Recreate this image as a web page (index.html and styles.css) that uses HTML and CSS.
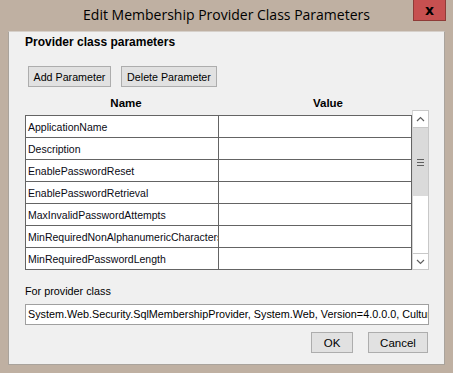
FILE: index.html
```html
<!DOCTYPE html>
<html lang="en">
<head>
    <meta charset="UTF-8">
    <title>Edit Membership Provider Class Parameters</title>
    <link rel="stylesheet" href="styles.css">
</head>
<body>
    <div class="window">
        <div class="titlebar">
            <span class="title">Edit Membership Provider Class Parameters</span>
            <button class="close">x</button>
        </div>
        <div class="client">
            <div class="heading">Provider class parameters</div>
            <div class="toolbar">
                <button class="btn add">Add Parameter</button>
                <button class="btn delete">Delete Parameter</button>
            </div>
            <div class="grid-head">
                <span>Name</span>
                <span>Value</span>
            </div>
            <div class="grid-wrap">
                <table class="grid">
                    <tr><td class="name">ApplicationName</td><td></td></tr>
                    <tr><td class="name">Description</td><td></td></tr>
                    <tr><td class="name">EnablePasswordReset</td><td></td></tr>
                    <tr><td class="name">EnablePasswordRetrieval</td><td></td></tr>
                    <tr><td class="name">MaxInvalidPasswordAttempts</td><td></td></tr>
                    <tr><td class="name">MinRequiredNonAlphanumericCharacters</td><td></td></tr>
                    <tr><td class="name">MinRequiredPasswordLength</td><td></td></tr>
                </table>
                <div class="scrollbar">
                    <div class="arrow up">
                        <svg width="9" height="6" viewBox="0 0 9 6"><path d="M1 5 L4.5 1.5 L8 5" fill="none" stroke="#606060" stroke-width="1.2"/></svg>
                    </div>
                    <div class="thumb">
                        <svg width="7" height="7" viewBox="0 0 7 7"><rect x="0" y="0" width="7" height="1" fill="#606060"/><rect x="0" y="3" width="7" height="1" fill="#606060"/><rect x="0" y="6" width="7" height="1" fill="#606060"/></svg>
                    </div>
                    <div class="track"></div>
                    <div class="arrow down">
                        <svg width="9" height="6" viewBox="0 0 9 6"><path d="M1 1 L4.5 4.5 L8 1" fill="none" stroke="#606060" stroke-width="1.2"/></svg>
                    </div>
                </div>
            </div>
            <div class="label">For provider class</div>
            <div class="textbox">System.Web.Security.SqlMembershipProvider, System.Web, Version=4.0.0.0, Culture=neutral, PublicKeyToken=b03f5f7f11d50a3a</div>
            <div class="actions">
                <button class="btn ok">OK</button>
                <button class="btn cancel">Cancel</button>
            </div>
        </div>
    </div>
</body>
</html>
```

FILE: styles.css
```css
* {
    box-sizing: border-box;
    margin: 0;
    padding: 0;
}

body {
    font-family: 'Liberation Sans', Arial, sans-serif;
    font-size: 11px;
    color: #000;
    background: #bfb0a2;
}

.window {
    width: 453px;
    height: 373px;
    background: #bfb0a2;
    padding: 0 8px 8px 8px;
}

.titlebar {
    position: relative;
    height: 31px;
    display: flex;
    align-items: center;
    justify-content: center;
}

.title {
    font-family: 'Open Sans', sans-serif;
    font-size: 14px;
    color: #000;
    padding-bottom: 3px;
}

.close {
    position: absolute;
    top: 0;
    right: -1px;
    width: 33px;
    height: 21px;
    background: #c75050;
    border: 1px solid #8f3b37;
    border-top: none;
    font-family: 'DejaVu Sans', sans-serif;
    font-size: 14px;
    font-weight: bold;
    color: #000;
    line-height: 16px;
}

.client {
    height: 334px;
    background: #f0f0f0;
    border: 1px solid #a9a39c;
    border-top-color: #d6d0ca;
    padding: 0 15px 0 16px;
}

.heading {
    font-weight: bold;
    font-size: 12px;
    height: 16px;
    line-height: 16px;
    margin-top: 2px;
}

.toolbar {
    display: flex;
    gap: 10px;
    margin: 16px 0 0 3px;
}

.btn {
    height: 21px;
    background: #e1e1e1;
    border: 1px solid #adadad;
    font-family: inherit;
    font-size: 10.7px;
    color: #000;
}

.add {
    width: 83px;
}

.delete {
    width: 96px;
}

.grid-head {
    display: flex;
    height: 28px;
    line-height: 33px;
    font-weight: bold;
    font-size: 11.5px;
}

.grid-head span {
    flex: 1;
    text-align: center;
}

.grid-wrap {
    display: flex;
    align-items: flex-end;
    margin-top: -5px;
}

.grid {
    width: 388px;
    border-collapse: collapse;
    background: #fff;
    table-layout: fixed;
}

.grid td {
    height: 22px;
    border: 1px solid #646464;
    padding: 0 0 0 2px;
    white-space: nowrap;
    overflow: hidden;
    font-size: 10.5px;
    color: #0a0a14;
}

.grid td.name {
    width: 193px;
}

.scrollbar {
    width: 17px;
    height: 160px;
    display: flex;
    flex-direction: column;
    background: #fff;
    border: 1px solid #c8c8c8;
    border-left-color: #d4d4d4;
}

.arrow {
    height: 17px;
    display: flex;
    align-items: center;
    justify-content: center;
    background: #fff;
}

.arrow.up {
    border-bottom: 1px solid #c8c8c8;
}

.arrow.down {
    border-top: 1px solid #c8c8c8;
    height: 16px;
}

.thumb {
    height: 68px;
    background: #dadada;
    display: flex;
    align-items: center;
    justify-content: center;
}

.track {
    flex: 1;
}

.label {
    margin-top: 13px;
    height: 16px;
    line-height: 16px;
    font-size: 10.8px;
}

.textbox {
    margin-top: 5px;
    width: 404px;
    height: 21px;
    line-height: 19px;
    background: #fff;
    border: 1px solid #a0a0a0;
    padding-left: 2px;
    white-space: nowrap;
    overflow: hidden;
    font-size: 10.8px;
}

.actions {
    display: flex;
    justify-content: flex-end;
    gap: 15px;
    margin: 7px 1px 0 0;
}

.ok {
    width: 42px;
    font-size: 11.5px;
}

.cancel {
    width: 60px;
    font-size: 11.5px;
}
```
